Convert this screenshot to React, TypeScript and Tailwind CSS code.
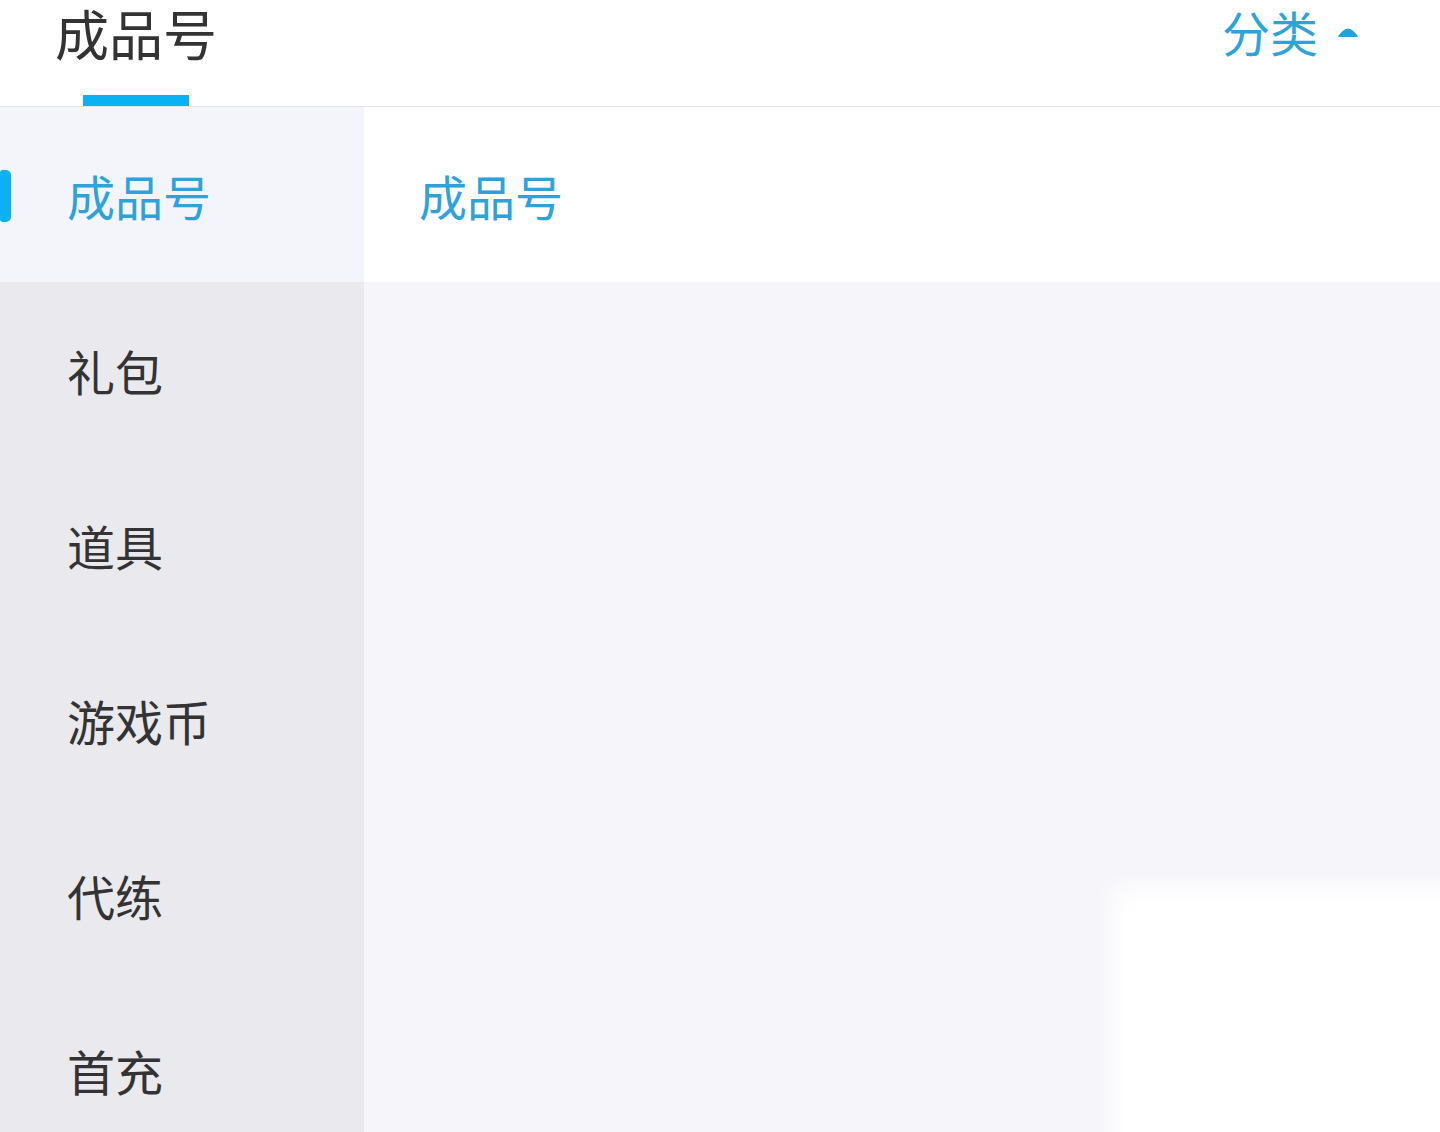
import React from "react";

const font = { fontFamily: '"Noto Sans CJK SC", "Noto Sans", sans-serif' };

export default function App() {
  const items = ["礼包", "道具", "游戏币", "代练", "首充"];
  return (
    <div className="w-[1440px] h-[1132px] overflow-hidden flex flex-col bg-white relative" style={font}>
      <header className="h-[107px] shrink-0 flex items-stretch justify-between border-b border-[#e3e3e6] bg-white">
        <div className="flex flex-col items-center pl-[55px]">
          <div className="text-[54px] leading-[64px] text-[#333333] mt-[1px]">成品号</div>
          <div className="mt-auto w-[106px] h-[11px] bg-[#0bb1f2]" />
        </div>
        <div className="flex items-start pr-[80px] pt-[2px] gap-[18px]">
          <span className="text-[48px] leading-[58px] text-[#2ea3d9]">分类</span>
          <svg width="24" height="12" viewBox="0 0 24 12" className="mt-[24px]">
            <path d="M2 11 Q3 8 8 4 Q12 1 16 4 Q21 8 22 11 Z" fill="#1fa3dd" />
          </svg>
        </div>
      </header>
      <div className="flex flex-1 min-h-0">
        <aside className="w-[364px] shrink-0 bg-[#e9e9ee] flex flex-col">
          <div className="h-[175px] shrink-0 bg-[#f4f5fa] flex items-center pl-[67px] relative">
            <div className="absolute left-0 top-[63px] w-[11px] h-[52px] rounded-r-[5px] rounded-l-[3px] bg-[#0bb1f2]" />
            <span className="text-[48px] leading-[58px] text-[#2ea3d9]">成品号</span>
          </div>
          {items.map((t) => (
            <div key={t} className="h-[175px] shrink-0 flex items-center pl-[67px]">
              <span className="text-[48px] leading-[58px] text-[#333333]">{t}</span>
            </div>
          ))}
        </aside>
        <main className="flex-1 flex flex-col bg-[#f5f5fa]">
          <div className="h-[175px] shrink-0 bg-white flex items-center pl-[55px]">
            <span className="text-[48px] leading-[58px] text-[#2ea3d9]">成品号</span>
          </div>
          <div className="flex-1" />
        </main>
      </div>
      <div className="absolute left-[1110px] top-[885px] w-[400px] h-[300px] bg-white blur-[14px]" />
    </div>
  );
}
